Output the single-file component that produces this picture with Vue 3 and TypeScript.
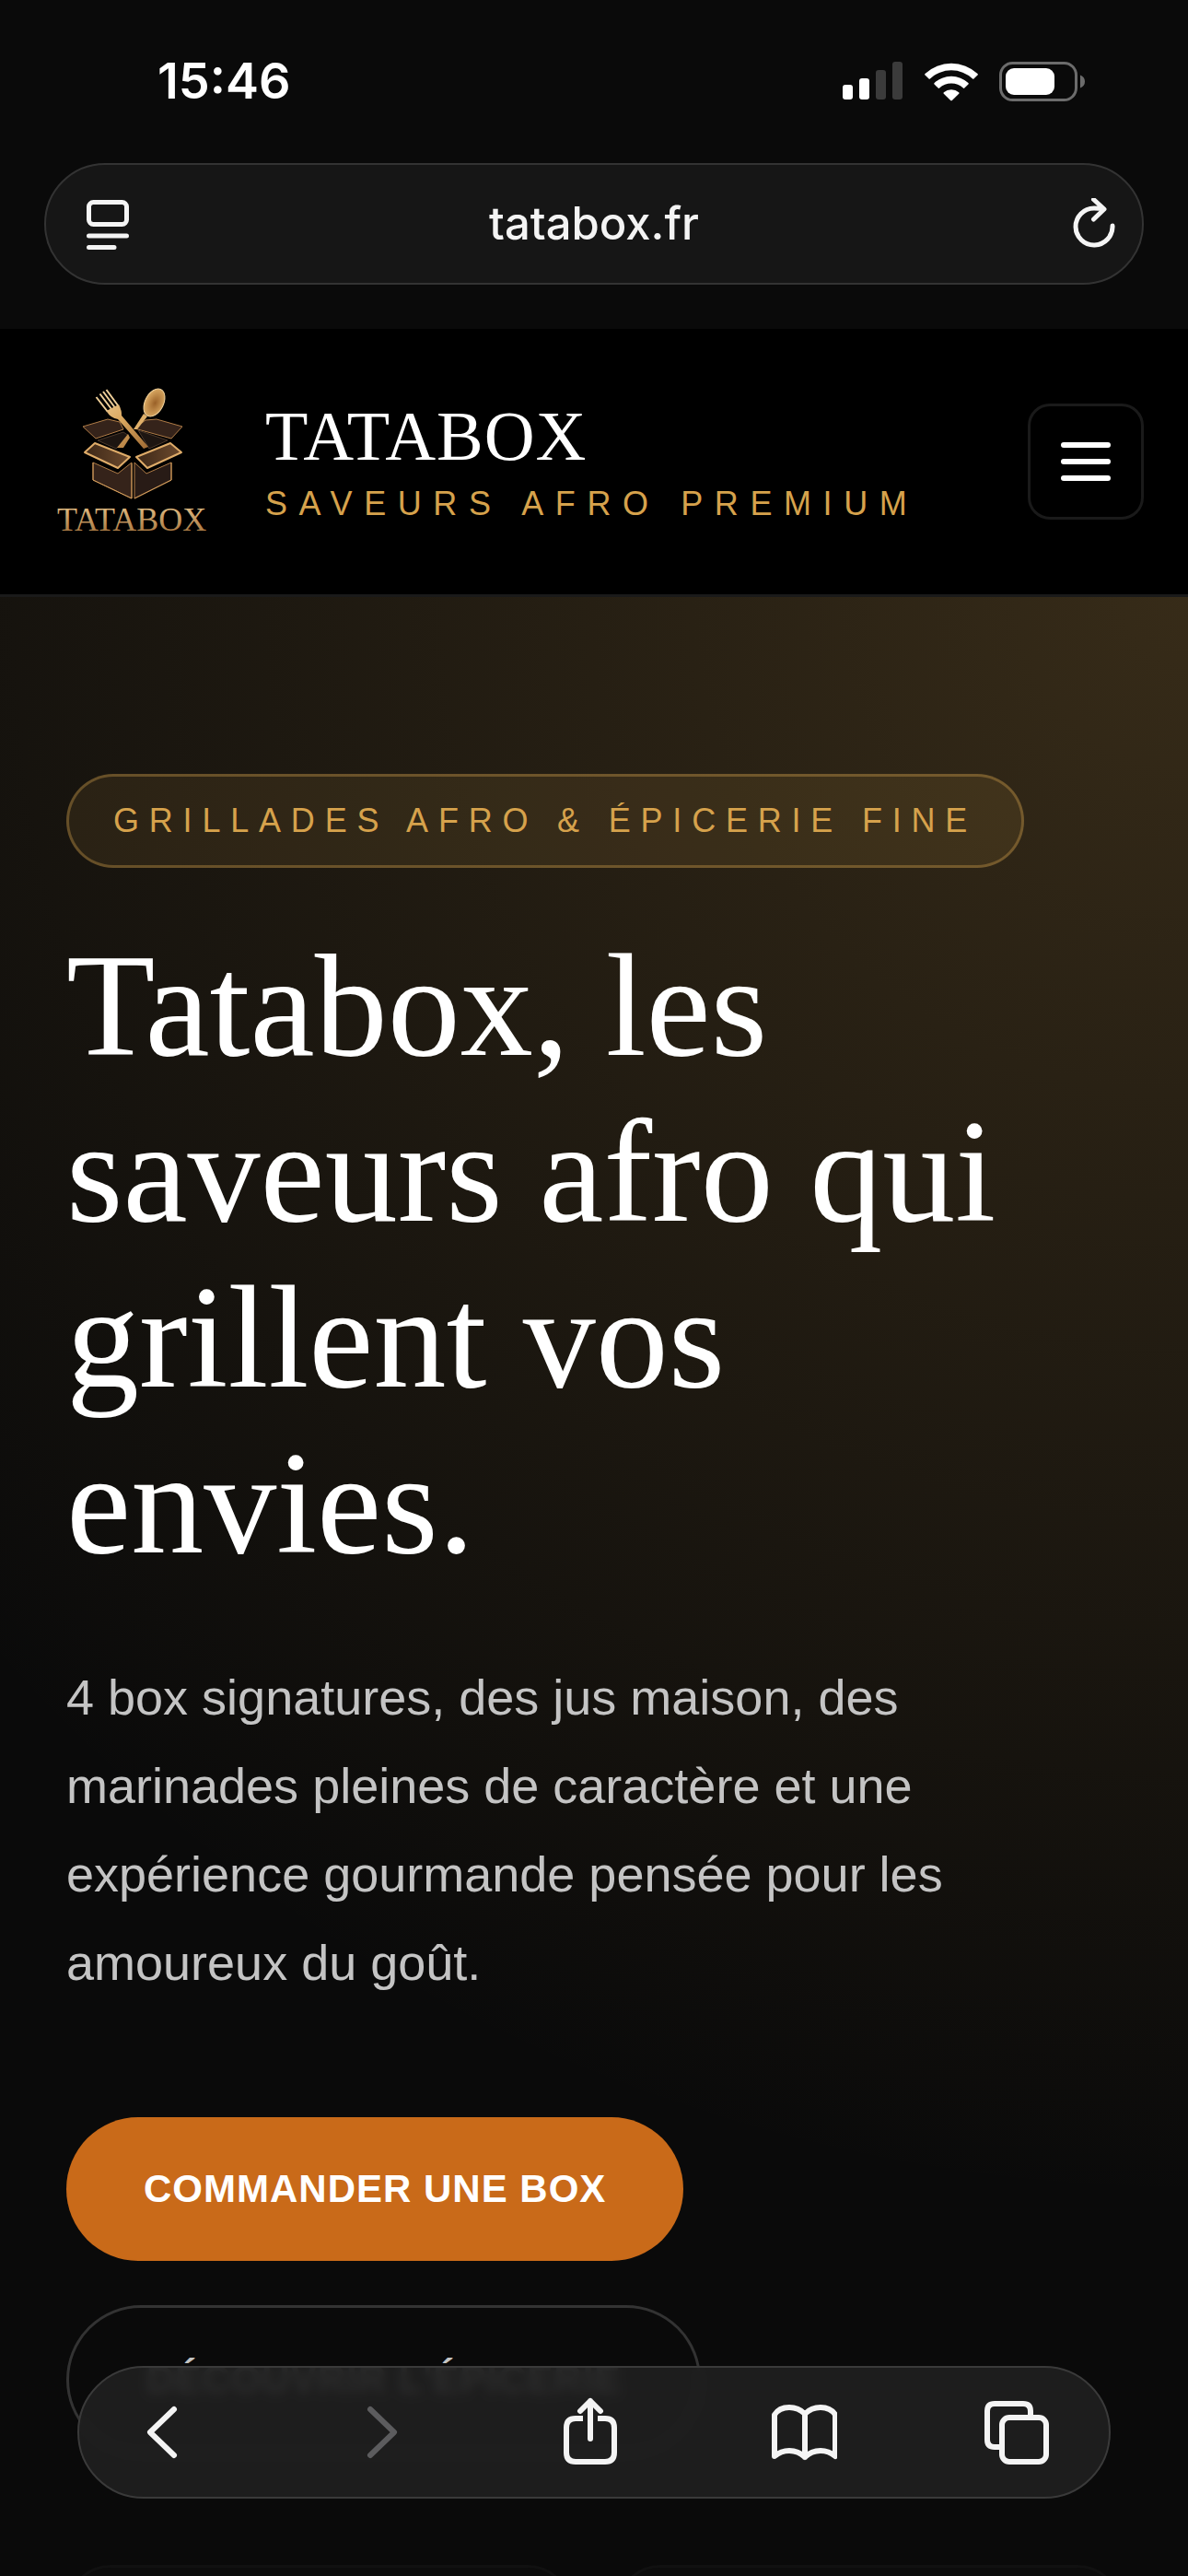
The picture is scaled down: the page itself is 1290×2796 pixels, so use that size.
<script setup lang="ts">
const address = 'tatabox.fr'
const pitch =
  '4 box signatures, des jus maison, des marinades pleines de caractère et une expérience gourmande pensée pour les amoureux du goût.'
</script>

<template>
  <div class="screen">
    <div class="status">
      <span class="clock">15:46</span>
      <div class="indicators">
        <svg width="66" height="42" viewBox="0 0 66 42" aria-label="Réseau">
          <rect x="0" y="25" width="11" height="16" rx="3" fill="#fff" />
          <rect x="18" y="18" width="11" height="23" rx="3" fill="#fff" />
          <rect x="36" y="9" width="11" height="32" rx="3" fill="#3b3b3b" />
          <rect x="54" y="0" width="11" height="41" rx="3" fill="#3b3b3b" />
        </svg>
        <svg width="58" height="43" viewBox="0 0 58 43" aria-label="Wi-Fi" fill="#fff">
          <path d="M0.500 13 A42 42 0 0 1 57.500 13 Q58.300 13.800 57.500 14.600 L53.400 18.500 Q52.800 19 52.100 18.400 A34 34 0 0 0 5.900 18.400 Q5.200 19 4.600 18.500 L0.500 14.600 Q-0.300 13.800 0.500 13Z" />
          <path d="M10.600 23 A27 27 0 0 1 47.400 23 Q48.200 23.800 47.400 24.600 L43.300 28.600 Q42.600 29.200 41.900 28.600 A19 19 0 0 0 16.100 28.600 Q15.400 29.200 14.700 28.600 L10.600 24.600 Q9.800 23.800 10.600 23Z" />
          <path d="M20.800 33.200 A12.500 12.500 0 0 1 37.200 33.200 Q38 34 37.200 34.800 L29.800 42 Q29 42.700 28.200 42 L20.800 34.800 Q20 34 20.800 33.200Z" />
        </svg>
        <svg width="93" height="43" viewBox="0 0 93 43" aria-label="Batterie">
          <rect x="1.500" y="1.500" width="82" height="40" rx="13" fill="none" stroke="#6c6c6c" stroke-width="3" />
          <rect x="7" y="7" width="53" height="29" rx="9" fill="#fff" />
          <path d="M88 14.500 Q93 16.500 93 21.500 Q93 26.500 88 28.500Z" fill="#6c6c6c" />
        </svg>
      </div>
    </div>

    <div class="address">
      <button type="button" aria-label="Options de page">
        <svg width="48" height="56" viewBox="0 0 48 56" fill="none" stroke="#f4f4f4" stroke-width="5" stroke-linecap="round">
          <rect x="4.500" y="4.500" width="41" height="24" rx="5" />
          <path d="M4.500 41H45.500M4.500 53.500H32" />
        </svg>
      </button>
      <span>{{ address }}</span>
      <button type="button" aria-label="Recharger">
        <svg width="48" height="56" viewBox="0 0 48 56" fill="none" stroke="#f4f4f4" stroke-width="5" stroke-linecap="round" stroke-linejoin="round">
          <path d="M43 30A20 20 0 1 1 23 11Q29 11 33 12M22.500 1.500L34 12L22.500 23" />
        </svg>
      </button>
    </div>

    <header class="site-header">
      <a class="brand" href="#accueil">
        <svg class="logo" width="192" height="192" viewBox="0 0 192 192" aria-hidden="true">
          <defs>
            <linearGradient id="gold" gradientUnits="userSpaceOnUse" x1="60" y1="20" x2="112" y2="82">
              <stop offset="0" stop-color="#f0d09a" />
              <stop offset="0.500" stop-color="#d9a65e" />
              <stop offset="1" stop-color="#a06b34" />
            </linearGradient>
            <linearGradient id="letters" x1="0" y1="0" x2="0" y2="1">
              <stop offset="0" stop-color="#ecca90" />
              <stop offset="1" stop-color="#9c6832" />
            </linearGradient>
            <linearGradient id="flap" x1="0" y1="0" x2="1" y2="0">
              <stop offset="0" stop-color="#3d2818" />
              <stop offset="1" stop-color="#6d4a2d" />
            </linearGradient>
            <radialGradient id="bowl" cx="0.550" cy="0.500" r="0.600">
              <stop offset="0" stop-color="#9a6128" />
              <stop offset="1" stop-color="#e2b26a" />
            </radialGradient>
          </defs>
          <g fill="#35231a" stroke="#b07c47" stroke-width="1">
            <path d="M42 58L69 50L82 53L86 61L56 71Z" />
            <path d="M150 58L122 50L110 51L98 60L138 71Z" />
            <path d="M58 73L86 64L92 68L78 82Z" fill="#1d1511" stroke="#4b382b" />
            <path d="M134 73L102 62L114 82Z" fill="#1d1511" stroke="#4b382b" />
            <path d="M53 97L80 109L95 97V136L53 116Z" />
            <path d="M138 97L111 109L98 97V136L138 116Z" fill="#281b16" />
            <path d="M53 97V116L95 136V98M138 97V116L98 136" fill="none" stroke="#d29d5c" />
          </g>
          <path d="M79 81L91 66L93 70L86 81Z" fill="url(#gold)" />
          <path d="M97 61L108 44L112 47L101 61Z" fill="#e0b06a" />
          <ellipse cx="119.500" cy="32" rx="10" ry="16" transform="rotate(27 119.500 32)" fill="url(#bowl)" stroke="#f0d09a" stroke-width="1" />
          <path d="M56.500 26L69 42M60.500 22.500L73 39M64 20L76.500 37M67.500 18L80 35" fill="none" stroke="#efcf99" stroke-width="2" />
          <path d="M67.500 41L81 34Q84.500 41 84 46L113 80L108 82L80 50Q72 49 67.500 41Z" fill="url(#gold)" />
          <g fill="url(#flap)" stroke="#dfac69" stroke-width="2" stroke-linejoin="round">
            <path d="M55 76L93 91L80 103L44 86Z" />
            <path d="M137 76L100 91L112 103L149 86Z" />
          </g>
          <text x="14" y="171" font-size="36" fill="url(#letters)" class="logo-name">TATABOX</text>
        </svg>
        <span class="brand-text">
          <span class="brand-name">TATABOX</span>
          <span class="brand-tag">SAVEURS AFRO PREMIUM</span>
        </span>
      </a>
      <button class="menu" type="button" aria-label="Menu"><i></i><i></i><i></i></button>
    </header>

    <main class="hero">
      <p class="badge">GRILLADES AFRO &amp; ÉPICERIE FINE</p>
      <h1>Tatabox, les saveurs afro qui grillent vos envies.</h1>
      <p class="pitch">{{ pitch }}</p>
      <div class="actions">
        <a class="btn primary" href="#box">COMMANDER UNE BOX</a>
        <a class="btn outline" href="#epicerie">DÉCOUVRIR L'ÉPICERIE</a>
      </div>
      <div class="cards">
        <div class="card"></div>
        <div class="card"></div>
      </div>
    </main>

    <nav class="toolbar" aria-label="Navigation">
      <button type="button" aria-label="Précédent">
        <svg width="72" height="76" viewBox="0 0 72 76"><path d="M47 13L21 38L47 63" /></svg>
      </button>
      <button type="button" aria-label="Suivant" disabled>
        <svg width="72" height="76" viewBox="0 0 72 76"><path d="M28 13L54 38L28 63" /></svg>
      </button>
      <button type="button" aria-label="Partager">
        <svg width="72" height="76" viewBox="0 0 72 76">
          <path d="M28 23H20Q10 23 10 33V60Q10 70 20 70H52Q62 70 62 60V33Q62 23 52 23H44" stroke-linecap="butt" />
          <path d="M36 45V4M25 15L36 4L47 15" />
        </svg>
      </button>
      <button type="button" aria-label="Signets">
        <svg width="72" height="76" viewBox="0 0 72 76">
          <path d="M37 18Q30 11 20 11Q9 11 4 19V64Q11 58 20 58Q30 58 37 65Q44 58 54 58Q63 58 70 64V19Q65 11 54 11Q44 11 37 18V65" />
        </svg>
      </button>
      <button type="button" aria-label="Onglets">
        <svg width="72" height="76" viewBox="0 0 72 76">
          <path d="M20 54H12Q4 54 4 46V15Q4 7 12 7H43Q51 7 51 15V22" />
          <rect x="20" y="22" width="48" height="48" rx="8" />
        </svg>
      </button>
    </nav>
  </div>
</template>

<style>
html,
body {
  background: #0a0a0a;
}
body {
  overflow: hidden;
}
</style>

<style scoped>
* {
  box-sizing: border-box;
}
.screen {
  height: 100vh;
  overflow: hidden;
  position: relative;
  background: #0a0a0a;
  color: #fff;
  font-family: "Liberation Sans", Arial, sans-serif;
}
svg {
  display: block;
}
button {
  border: 0;
  background: none;
  padding: 0;
  color: inherit;
}
a {
  color: inherit;
  text-decoration: none;
}
.status {
  display: flex;
  justify-content: space-between;
  align-items: center;
  padding: 56px 112px 0 171px;
}
.clock {
  font: 600 54px/64px Inter, sans-serif;
}
.indicators {
  display: flex;
  align-items: center;
  gap: 23px;
}
.address {
  margin: 57px 48px 48px;
  height: 132px;
  padding: 0 27px 0 42px;
  display: grid;
  grid-template-columns: 1fr auto 1fr;
  align-items: center;
  border: 2px solid #333;
  border-radius: 66px;
  background: #161616;
  color: #f4f4f4;
  font: 500 49px/64px Inter, sans-serif;
}
.address span {
  margin-right: 15px;
}
.address button:last-child {
  justify-self: end;
}
.site-header {
  display: flex;
  align-items: center;
  justify-content: space-between;
  padding: 48px;
  background: #000;
  border-bottom: 3px solid #1a1a1a;
}
.brand {
  display: flex;
  align-items: center;
  gap: 48px;
}
.logo-name {
  font-family: "Liberation Serif", serif;
}
.brand-text {
  display: flex;
  flex-direction: column;
  gap: 8px;
}
.brand-name {
  font: 400 76px/84px "Liberation Serif", serif;
  letter-spacing: 1px;
}
.brand-tag {
  font-size: 36px;
  line-height: 48px;
  letter-spacing: 0.35em;
  color: #d6a24c;
}
.menu {
  width: 126px;
  height: 126px;
  border: 3px solid #1a1a1a;
  border-radius: 24px;
  display: flex;
  flex-direction: column;
  align-items: center;
  justify-content: center;
  gap: 12px;
}
.menu i {
  width: 54px;
  height: 6px;
  border-radius: 3px;
  background: #fff;
}
.hero {
  padding: 192px 72px 0;
  background: radial-gradient(circle 135vw at top right, rgba(214, 162, 76, 0.22), transparent);
}
.badge {
  width: fit-content;
  margin: 0;
  padding: 24px 48px;
  border: 3px solid rgba(214, 162, 76, 0.35);
  border-radius: 51px;
  background: rgba(214, 162, 76, 0.1);
  font-size: 36px;
  line-height: 48px;
  letter-spacing: 0.3em;
  color: #d6a24c;
}
h1 {
  margin: 60px 0 0;
  font: 400 158px/180px "Liberation Serif", serif;
}
.pitch {
  margin: 72px 0 0;
  font-size: 54px;
  line-height: 96px;
  color: #c4c4c4;
}
.actions {
  margin-top: 120px;
  display: flex;
  flex-direction: column;
  align-items: flex-start;
  gap: 48px;
}
.btn {
  padding: 48px 84px;
  border-radius: 81px;
  font-size: 42px;
  font-weight: 700;
  line-height: 60px;
  letter-spacing: 1px;
}
.primary {
  background: #c96a19;
}
.outline {
  border: 3px solid #333;
  color: #c4c4c4;
}
.cards {
  margin-top: 120px;
  display: grid;
  grid-template-columns: 1fr 1fr;
  gap: 48px;
}
.card {
  height: 240px;
  border: 3px solid #111;
  border-radius: 48px;
  background: #0c0c0c;
}
.toolbar {
  position: absolute;
  left: 84px;
  right: 84px;
  bottom: 84px;
  height: 144px;
  padding: 0 64px 0 56px;
  display: flex;
  align-items: center;
  justify-content: space-between;
  border: 2px solid #3a3a3a;
  border-radius: 72px;
  background: rgba(31, 31, 31, 0.92);
  backdrop-filter: blur(6px);
}
.toolbar svg {
  fill: none;
  stroke: #f4f4f4;
  stroke-width: 6;
  stroke-linecap: round;
  stroke-linejoin: round;
}
.toolbar button:disabled svg {
  stroke: #5c5c5e;
}
</style>
